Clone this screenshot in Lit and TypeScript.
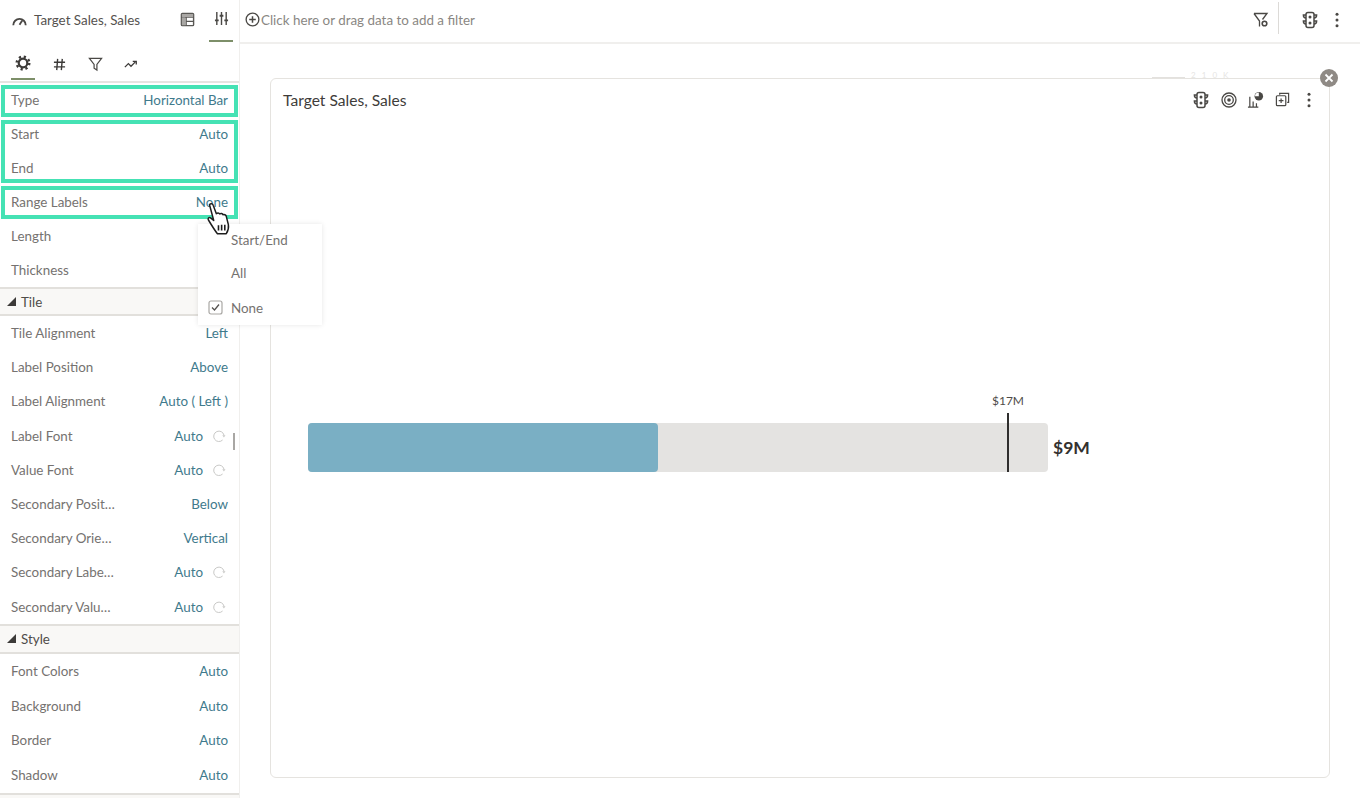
import { LitElement, html, css, svg } from "lit";
import { customElement } from "lit/decorators.js";

const refresh = svg`<svg class="ri" viewBox="0 0 14 14" width="14" height="14" fill="none" stroke="#c9c9c7" stroke-width="1"><path d="M12 6.2A5.2 5.2 0 1 0 10.6 11"/><path d="M10.3 6.2h3.2L11.9 8.4z" fill="#c9c9c7" stroke="none"/></svg>`;

const traffic = svg`<svg viewBox="0 0 18 18" width="18" height="18" fill="none" stroke="#4a4845" stroke-width="1.5"><rect x="5" y="1.5" width="8" height="15" rx="2"/><circle cx="9" cy="6" r="1.5" fill="#4a4845" stroke="none"/><circle cx="9" cy="12" r="1.5" fill="#4a4845" stroke="none"/><path d="M5 4H2.400c0 2 1 3 2.600 3M13 4h2.600c0 2-1 3-2.600 3M5 10H2.400c0 2 1 3 2.600 3M13 10h2.600c0 2-1 3-2.600 3"/></svg>`;

const kebab = svg`<svg viewBox="0 0 6 18" width="6" height="18" fill="#4a4845"><circle cx="3" cy="3.2" r="1.5"/><circle cx="3" cy="9" r="1.5"/><circle cx="3" cy="14.8" r="1.5"/></svg>`;

type Row = { l: string; v?: string; r?: boolean };

const tileRows: Row[] = [
  { l: "Tile Alignment", v: "Left" },
  { l: "Label Position", v: "Above" },
  { l: "Label Alignment", v: "Auto ( Left )" },
  { l: "Label Font", v: "Auto", r: true },
  { l: "Value Font", v: "Auto", r: true },
  { l: "Secondary Posit…", v: "Below" },
  { l: "Secondary Orie…", v: "Vertical" },
  { l: "Secondary Labe…", v: "Auto", r: true },
  { l: "Secondary Valu…", v: "Auto", r: true },
];
const styleRows: Row[] = [
  { l: "Font Colors", v: "Auto" },
  { l: "Background", v: "Auto" },
  { l: "Border", v: "Auto" },
  { l: "Shadow", v: "Auto" },
];

@customElement("app-root")
export class AppRoot extends LitElement {
  static styles = css`
    :host {
      display: block;
      width: 1360px;
      height: 798px;
      overflow: hidden;
      position: relative;
      background: #fff;
      font-family: Lato, "Liberation Sans", sans-serif;
      font-size: 13.4px;
      color: #757270;
    }
    .app { display: grid; grid-template-columns: 240px 1fr; height: 798px; }
    .panel { border-right: 1px solid #f0efed; position: relative; display: flex; flex-direction: column; }
    .phead { height: 42px; display: flex; align-items: center; padding-left: 12px; box-sizing: border-box; }
    .phead .t { margin-left: 7px; color: #55524f; width: 141px; margin-top: -3px; }
    .picon { width: 24px; height: 42px; display: flex; align-items: center; justify-content: center; box-sizing: border-box; padding-bottom: 4px; }
    .picon + .picon { margin-left: 10px; }
    .picon.on { border-bottom: 2px solid #7d8f69; }
    .tabs { height: 41px; display: flex; padding-left: 11px; gap: 12px; border-bottom: 2px solid #e6e4e1; box-sizing: border-box; }
    .tab { width: 24px; height: 38px; display: flex; align-items: center; justify-content: center; box-sizing: border-box; padding-top: 6px; }
    .tab.on { border-bottom: 2px solid #7d8f69; }
    .row { display: flex; align-items: center; justify-content: space-between; padding: 0 11px; box-sizing: border-box; height: 34px; white-space: nowrap; }
    .row.t { height: 34.2px; }
    .row.s { height: 34.6px; }
    .row .v { color: #3f7a8c; display: flex; align-items: center; }
    .ri { margin-left: 9px; margin-right: 2px; }
    .sec { height: 29px; box-sizing: border-box; background: #f9f8f6; border-top: 2px solid #e2e0dc; border-bottom: 2px solid #e2e0dc; display: flex; align-items: center; padding-left: 7px; gap: 5px; color: #4f4c49; }
    .sec.style { height: 30px; }
    .secend { border-top: 2px solid #e2e0dc; background: #f9f8f6; height: 4px; margin-top: 1px; }
    .hl { position: relative; }
    .hl::after { content: ""; position: absolute; left: 1px; right: 1px; border: 4.500px solid #45e2b4; pointer-events: none; }
    .h1::after { top: 2px; bottom: 0; }
    .h2::after { top: 3px; bottom: 2px; }
    .h3::after { top: 1px; bottom: 0; }
    .scroll { position: absolute; left: 233px; top: 433px; width: 2px; height: 17px; background: #a9a7a4; }
    .menu { position: absolute; left: 198px; top: 224px; width: 124px; height: 101px; background: #fff; box-shadow: 0 0 5px rgba(0,0,0,.1); box-sizing: border-box; z-index: 2; }
    .mi { height: 34px; display: flex; align-items: center; padding-left: 33px; position: relative; }
    .mi.first { height: 32px; }
    .mi.last { height: 35px; }
    .mi svg { position: absolute; left: 10px; top: 10px; }
    .cursor { position: absolute; left: 203px; top: 201px; z-index: 3; }
    .main { display: flex; flex-direction: column; min-width: 0; }
    .fbar { height: 44px; box-sizing: border-box; border-bottom: 2px solid #f0efed; display: flex; align-items: center; padding-left: 5px; padding-bottom: 3px; color: #8a8783; }
    .fbar .txt { margin-left: 1px; flex: 1; }
    .fbar .ficon { display: flex; }
    .divider { width: 1px; height: 32px; background: #dcdad7; margin: 2px 22px 0 9px; align-self: flex-start; }
    .fbar .k { margin: 0 20px 0 15px; display: flex; }
    .canvas { flex: 1; padding: 34px 30px 0; position: relative; }
    .ghost { position: absolute; left: 912px; top: 26px; display: flex; align-items: center; gap: 6px; font-size: 8px; letter-spacing: 2px; color: #e6e5e3; }
    .ghost i { display: block; width: 33px; height: 2px; background: #e3e1de; margin-top: 6px; }
    .card { height: 700px; box-sizing: border-box; border: 1px solid #e5e3df; border-radius: 6px; background: #fff; position: relative; display: flex; flex-direction: column; }
    .chead { display: flex; align-items: center; height: 42px; padding: 0 17px 0 12px; }
    .ctitle { font-size: 15.600px; color: #3e3c3a; flex: 1; }
    .cicons { display: flex; align-items: center; gap: 10.500px; margin-top: -1px; }
    .kb { margin-left: 6px; display: flex; }
    .close { position: absolute; right: -9px; top: -10px; width: 18px; height: 18px; border-radius: 50%; background: #8f8a85; display: flex; align-items: center; justify-content: center; }
    .chart { padding: 302px 0 0 37px; display: flex; }
    .track { width: 740px; height: 49px; background: #e4e3e1; border-radius: 4px; position: relative; }
    .fill { height: 49px; width: 350px; background: #7aafc4; border-radius: 4px; }
    .target { position: absolute; left: 699px; top: -10px; width: 1.500px; height: 59px; background: #2f2e2d; }
    .tlabel { position: absolute; left: 670px; width: 60px; text-align: center; top: -30px; font-size: 12px; color: #4f4c49; }
    .val { font-size: 17.500px; font-weight: 700; color: #33312f; margin-left: 5px; line-height: 49px; }
  `;

  private row(r: Row, cls = "") {
    return html`<div class="row ${cls}"><span>${r.l}</span><span class="v">${r.v}${r.r ? refresh : ""}</span></div>`;
  }

  render() {
    return html`<div class="app">
      <aside class="panel">
        <div class="phead">
          <svg viewBox="0 0 16 12" width="15" height="11" fill="none" stroke="#4a4845" stroke-width="2"><path d="M1.200 10A6.800 6.800 0 0 1 14.800 10"/><path d="M8 9.500 11 5" stroke-width="2"/></svg>
          <span class="t">Target Sales, Sales</span>
          <div class="picon"><svg viewBox="0 0 16 16" width="15" height="15" fill="none" stroke="#5a5855" stroke-width="1.500"><rect x="1.500" y="1.500" width="13" height="13" rx="1"/><path d="M1.500 5.500h13M6.500 5.500v9M6.500 10h8"/><path d="M2 2h12v3H2zM2 6h4v8H2z" fill="#a9a7a4" stroke="none"/></svg></div>
          <div class="picon on"><svg viewBox="0 0 16 16" width="15" height="15" fill="none" stroke="#4a4845" stroke-width="1.500"><path d="M3 1v14M8 1v14M13 1v14"/><path d="M1 10h4M6 5h4M11 10h4" stroke-width="2"/></svg></div>
        </div>
        <div class="tabs">
          <div class="tab on"><svg viewBox="0 0 16 16" width="16" height="16" fill="none" stroke="#3c3a38"><circle cx="8" cy="8" r="4.300" stroke-width="2.200"/><circle cx="8" cy="8" r="6.300" stroke-width="2.400" stroke-dasharray="2.200 2.750"/></svg></div>
          <div class="tab"><svg viewBox="0 0 14 14" width="13" height="13" fill="none" stroke="#3c3a38" stroke-width="1.500"><path d="M5 1 4 13M10 1 9 13M1 4.500h12M1 9.500h12"/></svg></div>
          <div class="tab"><svg viewBox="0 0 16 16" width="15" height="15" fill="none" stroke="#4a4845" stroke-width="1.300"><path d="M1.500 1.500h13L9.500 8v6L6.500 12V8z"/></svg></div>
          <div class="tab"><svg viewBox="0 0 16 10" width="14" height="9" fill="none" stroke="#3c3a38" stroke-width="1.500"><path d="M1 8 5 4l3 3 5-5"/><path d="M10 1.500h4v3.500"/></svg></div>
        </div>
        <div class="hl h1">${this.row({ l: "Type", v: "Horizontal Bar" })}</div>
        <div class="hl h2">${this.row({ l: "Start", v: "Auto" })}${this.row({ l: "End", v: "Auto" })}</div>
        <div class="hl h3">${this.row({ l: "Range Labels", v: "None" })}</div>
        ${this.row({ l: "Length" })}
        ${this.row({ l: "Thickness" })}
        <div class="sec"><svg viewBox="0 0 9 9" width="9" height="9"><path d="M9 0v9H0z" fill="#3c3a38"/></svg>Tile</div>
        ${tileRows.map((r) => this.row(r, "t"))}
        <div class="sec style"><svg viewBox="0 0 9 9" width="9" height="9"><path d="M9 0v9H0z" fill="#3c3a38"/></svg>Style</div>
        ${styleRows.map((r) => this.row(r, "s"))}
        <div class="secend"></div>
        <div class="scroll"></div>
      </aside>
      <main class="main">
        <div class="fbar">
          <svg viewBox="0 0 16 16" width="15" height="15" fill="none" stroke="#4a4845" stroke-width="1.400"><circle cx="8" cy="8" r="6.800"/><path d="M8 4.500v7M4.500 8h7" stroke-width="1.600"/></svg>
          <span class="txt">Click here or drag data to add a filter</span>
          <span class="ficon"><svg viewBox="0 0 16 16" width="16" height="16" fill="none" stroke="#4a4845" stroke-width="1.300"><path d="M1 1.500h13L9.500 7.500M1 1.500 6.500 9v5.500"/><circle cx="11.500" cy="11.500" r="2.300" stroke-width="1.600"/></svg></span>
          <span class="divider"></span>
          ${traffic}
          <span class="k">${kebab}</span>
        </div>
        <div class="canvas">
          <div class="ghost"><i></i><span>2 1 0 K</span></div>
          <div class="card">
            <div class="close"><svg viewBox="0 0 10 10" width="10" height="10" stroke="#fff" stroke-width="1.800"><path d="M1.500 1.500l7 7M8.500 1.500l-7 7"/></svg></div>
            <div class="chead">
              <span class="ctitle">Target Sales, Sales</span>
              <div class="cicons">
                ${traffic}
                <svg viewBox="0 0 16 16" width="16" height="16" fill="none" stroke="#4a4845"><circle cx="8" cy="8" r="7" stroke-width="1.300"/><circle cx="8" cy="8" r="4.300" stroke-width="1.300"/><circle cx="8" cy="8" r="1.800" fill="#4a4845" stroke="none"/></svg>
                <svg viewBox="0 0 18 18" width="17" height="17" fill="none" stroke="#4a4845" stroke-width="1.300"><path d="M1 17h11M3 6v11M6.500 11v6M10 13v4"/><circle cx="12.500" cy="5.500" r="4.500" fill="#4a4845" stroke="none"/><path d="M12.500 5.500V1.500a4 4 0 0 0-4 4z" fill="#fff" stroke="none"/></svg>
                <svg viewBox="0 0 16 16" width="15" height="15" fill="none" stroke="#4a4845" stroke-width="1.300"><path d="M5 3V1.500h9.500V11H13"/><rect x="1.500" y="4" width="10" height="10.500" rx="1"/><path d="M6.500 6.800v5M4 9.300h5"/></svg>
                <span class="kb">${kebab}</span>
              </div>
            </div>
            <div class="chart">
              <div class="track">
                <div class="fill"></div>
                <div class="target"></div>
                <div class="tlabel">$17M</div>
              </div>
              <div class="val">$9M</div>
            </div>
          </div>
        </div>
      </main>
      <div class="menu">
        <div class="mi first">Start/End</div>
        <div class="mi">All</div>
        <div class="mi last"><svg viewBox="0 0 15 15" width="15" height="15" fill="none"><rect x="1" y="1" width="13" height="13" rx="2" stroke="#a9a7a4" stroke-width="1.200"/><path d="M4 7.500l2.500 2.500L11 4.500" stroke="#55524f" stroke-width="1.300"/></svg>None</div>
      </div>
      <svg class="cursor" viewBox="0 0 30 36" width="32" height="38" fill="#fff" stroke="#1d1d1d" stroke-width="1.400" stroke-linejoin="round"><path d="M6 3.500c1-1.500 3-1 3.500.5l3 8c1-1 2.500-1 3.200.3 1-.8 2.500-.5 3 .7 1.200-.6 2.800.2 3.200 1.500l2 8c.5 3-.5 6-2 8.500H13.500C11 28 8 23 5 18c-1-1.500.5-3 2-2l3 2.500z"/><path d="M14.500 23v5M17.500 22.500v5.500M20.500 22.500v5.500" stroke-width="1.500"/></svg>
    </div>`;
  }
}
